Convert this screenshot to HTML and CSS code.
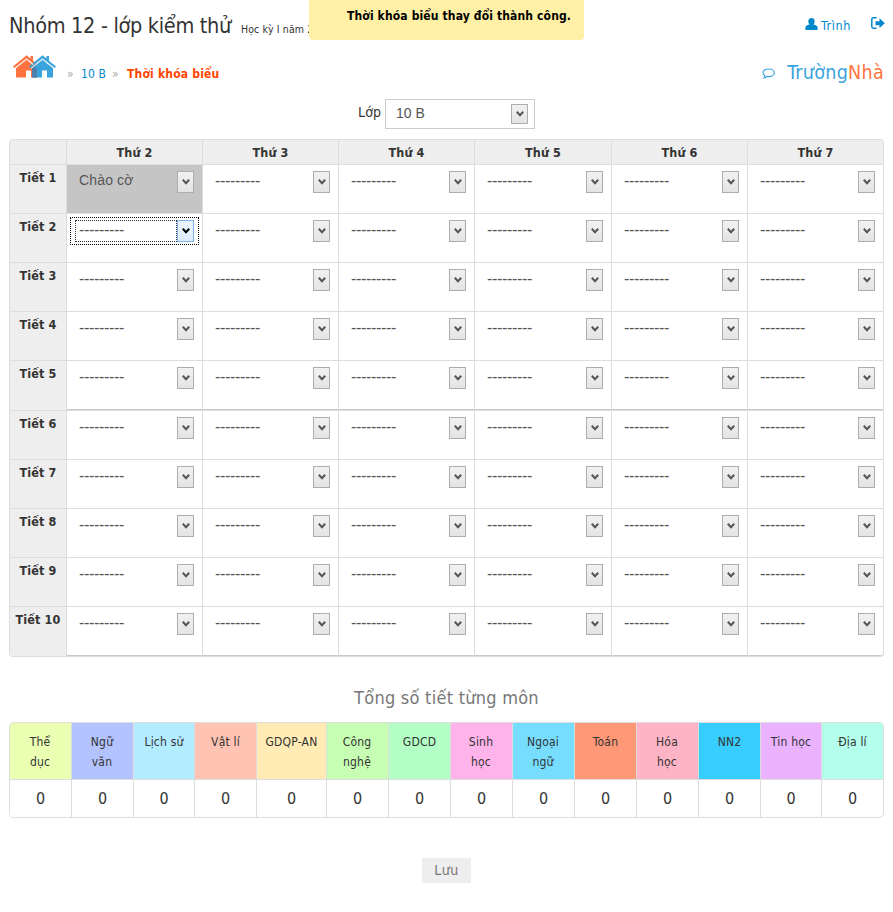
FILE: index.html
```
<!DOCTYPE html>
<html lang="vi">
<head>
<meta charset="utf-8">
<title>Thời khóa biểu</title>
<link rel="stylesheet" href="styles.css">
</head>
<body>
<svg class="defs" aria-hidden="true">
  <symbol id="caret" viewBox="0 0 8 6"><path d="M.8 .8 4 4.200 7.200 .8" fill="none" stroke="currentColor" stroke-width="2"/></symbol>
</svg>
<div class="notice">Thời khóa biểu thay đổi thành công.</div>
<header class="top">
  <div class="school"><h1>Nhóm 12 - lớp kiểm thử</h1><small>Học kỳ I năm 2012</small></div>
  <nav class="account">
    <a class="user"><svg width="13" height="12" viewBox="0 0 13 12"><path fill="currentColor" d="M6.500 0C8.500 0 9.700 1.300 9.700 3.200c0 1.500-.6 2.600-1.300 3.300 2.700.3 4.400 1.500 4.400 3.700 0 1.100-.4 1.800-1.100 1.800H1.300C.6 12 .2 11.300 .2 10.200c0-2.200 1.700-3.400 4.400-3.700C3.900 5.800 3.300 4.700 3.300 3.200 3.300 1.300 4.500 0 6.500 0z"/></svg><span>Trình</span></a>
    <a class="exit"><svg width="14" height="12" viewBox="0 0 14 12"><path fill="none" stroke="currentColor" stroke-width="1.500" d="M5.500 .8H2.500Q.8 .8 .8 2.500v7q0 1.700 1.700 1.700h3"/><path fill="currentColor" d="M4.500 4.200H8.500V1.300L13.800 6.200 8.500 11V8.200h-4z"/></svg></a>
  </nav>
</header>
<div class="sub">
  <div class="crumbs">
    <svg class="home" width="43" height="24" viewBox="0 0 43 24">
      <g fill="#ff7340"><path d="M3 12.500 13.500 4 24 12.500V22.500h-6v-7h-5v7H3z"/><path d="M0 11.500 13.500 .3l4 3.200V1H20v4.800l7 5.700-1.300 1.500L13.500 3.300 1.300 13z"/></g>
      <g fill="#3aa3dc"><path d="M19 12.500 29.500 4 40 12.500V22.500h-6v-7h-5v7H19z"/><path d="M16 11.500 29.500 .3l4 3.200V1H36v4.800l7 5.700-1.300 1.500L29.500 3.300 17.300 13z"/></g>
      <path fill="#4a7fae" d="M19 13.500l2.500-2 2.500 2v9h-5z"/>
      <path fill="none" stroke="#fff" stroke-width=".9" d="M2 13.600 13.500 4.400l7 5.600M18 13.600 29.500 4.400 41 13.600"/>
    </svg>
    <span class="sep s1">»</span><a class="cls">10 B</a><span class="sep s2">»</span><strong>Thời khóa biểu</strong>
  </div>
  <div class="brand"><svg width="13" height="11" viewBox="0 0 13 11"><path fill="none" stroke="#3aa3dc" stroke-width="1.200" d="M6.700 1C9.800 1 12.300 2.600 12.300 4.800S9.800 8.600 6.700 8.600q-.9 0-1.700-.2Q3.700 9.700 2 9.900q.9-1 .9-2.200Q1 6.700 1 4.800C1 2.600 3.600 1 6.700 1z"/></svg><span class="b1">Trường</span><span class="b2">Nhà</span></div>
</div>
<div class="picker"><label>Lớp</label><div class="select big"><span>10 B</span><i class="arrow"><svg><use href="#caret"/></svg></i></div></div>
<div class="timetable" id="timetable"></div>
<h2>Tổng số tiết từng môn</h2>
<div class="totals" id="totals"></div>
<div class="actions"><div class="save">Lưu</div></div>
<script src="script.js"></script>
</body>
</html>
```
FILE: styles.css
```
* { box-sizing: border-box; }
body { margin: 0; width: 893px; height: 912px; overflow: hidden; background: #fff; color: #333; font-family: "DejaVu Sans Condensed", "DejaVu Sans", sans-serif; font-stretch: condensed; font-size: 12px; padding: 0 9px; }
h1, h2 { margin: 0; font-weight: normal; }
.defs { position: absolute; width: 0; height: 0; }
.notice { position: absolute; left: 309px; top: 0; width: 275px; height: 40px; background: #fff0a5; border-radius: 0 0 4px 4px; color: #000; font-weight: bold; font-size: 12px; line-height: 32px; letter-spacing: .14px; padding-left: 38px; white-space: nowrap; }
.top { height: 50px; display: flex; justify-content: space-between; }
.school { display: flex; white-space: nowrap; }
h1 { font-size: 21.500px; letter-spacing: -.3px; line-height: 51px; width: 232px; }
small { font-size: 10.500px; letter-spacing: .1px; line-height: 58px; }
.account { display: flex; color: #08c; padding-top: 17px; }
.user { display: flex; gap: 3px; margin-right: 20px; }
.user svg { margin-top: 1px; }
.user span { line-height: 18px; font-size: 12.500px; letter-spacing: .6px; }
.exit { width: 13px; }
.sub { height: 49px; display: flex; justify-content: space-between; }
.crumbs { display: flex; padding: 5px 0 0 4px; line-height: 38px; white-space: nowrap; }
.sep { color: #aaa; width: 14px; }
.s1 { margin-left: 11px; }
.s2 { margin-left: 3px; }
.cls { color: #08c; width: 28px; letter-spacing: .1px; }
.crumbs strong { color: #ff4500; letter-spacing: .2px; margin-left: 1px; }
.brand { display: flex; font-size: 19.500px; letter-spacing: .3px; line-height: 45px; white-space: nowrap; }
.brand svg { margin: 18px 12px 0 0; }
.b1 { color: #3aa3dc; }
.b2 { color: #ff7340; }
.picker { display: flex; height: 40px; padding-left: 349px; }
.picker label { width: 27px; line-height: 27px; font-size: 14px; letter-spacing: .2px; }
.select { display: flex; justify-content: space-between; color: #555; font: 14px "Liberation Sans", sans-serif; }
.big { width: 150px; height: 30px; border: 1px solid #ccc; padding: 4px 6px 0 10px; line-height: 19px; }
.arrow { width: 17px; height: 22px; flex: none; border: 1px solid #adadad; background: linear-gradient(#f1f1f1, #e4e4e4); display: flex; align-items: center; justify-content: center; }
.big .arrow { height: 20px; }
.arrow svg { width: 8px; height: 6px; color: #555; }
.timetable { display: grid; grid-template-columns: 57px 136px 136px 136px 137px 136px 136px; grid-template-rows: 25px repeat(4, 49px) 50px repeat(4, 49px) 50px; width: 875px; height: 518px; border: solid #ddd; border-width: 0 1px 1px 0; border-radius: 4px; overflow: hidden; }
.head, .row-head, .cell { border: solid #ddd; border-width: 1px 0 0 1px; }
.head, .row-head { background: #eee; font-weight: bold; font-size: 12.500px; letter-spacing: .1px; text-align: center; white-space: nowrap; line-height: 25px; }
.timetable > :first-child { border-top-left-radius: 4px; }
.cell { padding: 6px 8px 0 12px; }
.cell .select { line-height: 19px; }
.cell .dashes { font-size: 16px; letter-spacing: -.33px; line-height: 20px; }
.session-end { box-shadow: inset 0 -1px #c8c8c8; }
.fixed { background: #c5c5c5; }
.fixed span { letter-spacing: .15px; }
.focused { padding: 3px 3px 0; }
.focused .select { width: 129px; height: 28px; border: 1px dotted #000; padding: 2px 4px 0 4px; }
.focused .select .dashes { width: 103px; height: 22px; border: 1px dotted #333; padding-left: 3px; line-height: 18px; }
.focused .arrow { border-color: #7eb4ea; background: linear-gradient(#ecf4fc, #dcecfc); }
.focused .arrow svg { color: #000; }
h2 { height: 65px; text-align: center; color: #777; font-size: 18px; letter-spacing: .25px; line-height: 82px; }
.totals { display: grid; grid-template-columns: 62px 62px 61px 62px 70px 62px 62px 62px 62px 62px 62px 62px 61px 62px; grid-template-rows: 57px 38px; height: 96px; border: solid #ddd; border-width: 0 1px 1px 0; border-radius: 5px; overflow: hidden; }
.totals div { border: solid #ddd; border-width: 1px 0 0 1px; text-align: center; }
.totals > :first-child { border-top-left-radius: 5px; }
.totals .subject { padding: 9px 10px 0 9px; line-height: 20px; letter-spacing: .2px; }
.totals .nowrap { padding-left: 0; padding-right: 0; white-space: nowrap; }
.totals .count { font-size: 16px; line-height: 37px; }
.actions { display: flex; justify-content: center; padding: 40px 0 0; }
.save { width: 49px; height: 25px; background: #eee; color: #777; font-size: 14px; letter-spacing: .5px; line-height: 25px; text-align: center; }
.bg0 { background: #ebffb3; } .bg1 { background: #b3c3ff; } .bg2 { background: #b3ebff; } .bg3 { background: #ffc3b3; } .bg4 { background: #ffebb3; } .bg5 { background: #c6ffb3; } .bg6 { background: #b3ffc6; } .bg7 { background: #ffb3eb; } .bg8 { background: #76ddff; } .bg9 { background: #ff9876; } .bg10 { background: #ffb3c6; } .bg11 { background: #38cdff; } .bg12 { background: #ebb3ff; } .bg13 { background: #b3ffeb; }
```
FILE: script.js
```
const arrow = '<i class="arrow"><svg><use href="#caret"/></svg></i>';
let html = '<div class="head"></div>';
for (let d = 2; d <= 7; d++) html += `<div class="head">Thứ ${d}</div>`;
for (let p = 1; p <= 10; p++) {
  html += `<div class="row-head">Tiết ${p}</div>`;
  for (let d = 2; d <= 7; d++) {
    const fixed = p === 1 && d === 2;
    const cls = (fixed ? ' fixed' : '') + (p === 2 && d === 2 ? ' focused' : '') + (p % 5 === 0 ? ' session-end' : '');
    const text = fixed ? '<span>Chào cờ</span>' : '<span class="dashes">---------</span>';
    html += `<div class="cell${cls}"><div class="select">${text}${arrow}</div></div>`;
  }
}
document.getElementById('timetable').innerHTML = html;

const subjects = ['Thể dục', 'Ngữ văn', 'Lịch sử', 'Vật lí', 'GDQP-AN', 'Công nghệ', 'GDCD', 'Sinh học', 'Ngoại ngữ', 'Toán', 'Hóa học', 'NN2', 'Tin học', 'Địa lí'];
const twoLines = [0, 1, 5, 7, 8, 10];
document.getElementById('totals').innerHTML =
  subjects.map((s, i) => twoLines.includes(i)
    ? `<div class="subject bg${i}">${s.replace(' ', '<br>')}</div>`
    : `<div class="subject nowrap bg${i}">${s}</div>`).join('') +
  subjects.map(() => '<div class="count">0</div>').join('');
```
